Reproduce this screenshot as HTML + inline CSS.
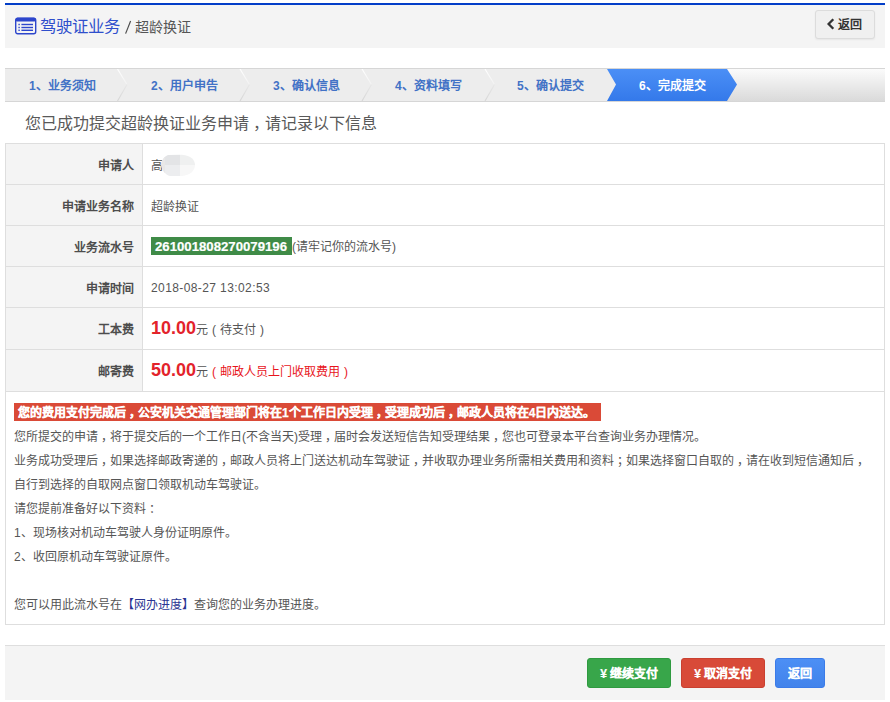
<!DOCTYPE html>
<html lang="zh-CN">
<head>
<meta charset="utf-8">
<style>
*{margin:0;padding:0;box-sizing:border-box;}
html,body{width:890px;height:702px;background:#fff;overflow:hidden;}
body{font-family:"Liberation Sans",sans-serif;color:#555;font-size:12px;position:relative;}
.abs{position:absolute;}
/* header */
#topline{left:5px;top:3px;width:880px;height:2px;background:#033ec8;}
#hdr{left:5px;top:5px;width:880px;height:43px;background:#f4f4f4;}
#icon{left:15px;top:17px;}
#title{left:40px;top:14px;font-size:16.4px;line-height:24px;color:#2f4fcc;white-space:nowrap;}
#sub{left:135px;top:17px;font-size:14px;line-height:20px;color:#555;white-space:nowrap;}
#back{left:815px;top:10px;width:60px;height:29px;border:1px solid #dcdcdc;border-radius:3px;background:#f0f0f0;box-shadow:0 1px 2px rgba(0,0,0,0.06);font-size:12px;font-weight:bold;color:#333;line-height:27px;text-align:center;}
/* steps */
#steps{left:5px;top:68px;width:880px;height:34px;border-top:1px solid #d6d6d6;border-bottom:1px solid #d6d6d6;background:linear-gradient(#fbfbfb,#dadada);}
.st{position:absolute;top:69px;height:32px;background:#ededed;}
.stt{position:absolute;top:70px;height:32px;line-height:32px;font-size:12px;font-weight:bold;color:#4272c6;white-space:nowrap;}
/* heading */
#head{left:25px;top:113px;font-size:16px;line-height:22px;color:#595959;white-space:nowrap;}
/* table */
#tbl{left:5px;top:143px;width:880px;height:482px;border:1px solid #dedede;}
.row{position:absolute;left:5px;width:880px;border-top:1px solid #dedede;}
.lab{position:absolute;left:6px;width:136px;background:#f4f4f4;}
.ltx{position:absolute;right:0;width:140px;text-align:right;font-size:12px;font-weight:bold;color:#4d4d4d;white-space:nowrap;}
.val{position:absolute;left:151px;font-size:12px;color:#555;white-space:nowrap;}
#vdiv{left:142px;top:144px;width:1px;height:247px;background:#dedede;}
.red{color:#e3232b;}
.red2{color:#e8141c;}
.yen{display:inline-block;margin-right:3px;}
.fp{position:relative;left:3px;}
#head .fp{left:4px;}
.pp{display:inline-block;width:12px;text-align:center;}
.notice{position:absolute;left:14px;font-size:12px;line-height:24px;color:#555;white-space:nowrap;}
#banner{left:14px;top:403px;width:587px;height:18px;background:#da4a37;color:#fff;font-weight:bold;font-size:12px;line-height:16px;padding-top:2px;padding-left:4px;-webkit-text-stroke:0.25px #fff;white-space:nowrap;}
/* footer */
#foot{left:5px;top:645px;width:880px;height:55px;background:#f4f4f4;border-top:1px solid #dedede;}
.btn{position:absolute;top:658px;height:30px;border-radius:3px;color:#fff;font-size:12px;font-weight:bold;-webkit-text-stroke:0.2px #fff;line-height:30px;text-align:center;white-space:nowrap;}
</style>
</head>
<body>
<div id="topline" class="abs"></div>
<div id="hdr" class="abs"></div>
<svg id="icon" class="abs" width="22" height="18" viewBox="0 0 22 18">
  <rect x="0.7" y="1.2" width="20" height="15.6" rx="2" fill="none" stroke="#2d46cc" stroke-width="1.4"/>
  <rect x="0.7" y="0.8" width="20" height="3.8" rx="1.5" fill="#2d46cc"/>
  <rect x="3.4" y="6.8" width="1.4" height="1.4" fill="#2d46cc"/>
  <rect x="3.4" y="9.8" width="1.4" height="1.4" fill="#2d46cc"/>
  <rect x="3.4" y="12.6" width="1.4" height="1.4" fill="#2d46cc"/>
  <rect x="6.4" y="6.8" width="11.6" height="1.4" fill="#2d46cc"/>
  <rect x="6.4" y="9.8" width="11.6" height="1.4" fill="#2d46cc"/>
  <rect x="6.4" y="12.6" width="11.6" height="1.4" fill="#2d46cc"/>
</svg>
<div id="title" class="abs">驾驶证业务</div>
<svg class="abs" style="left:120px;top:16px" width="16" height="22" viewBox="0 0 16 22"><line x1="10.6" y1="5" x2="5.6" y2="17.6" stroke="#4a4a4a" stroke-width="1.15"/></svg>
<div id="sub" class="abs">超龄换证</div>
<div id="back" class="abs"><span style="position:relative;left:5px;top:1px">返回</span></div>
<svg class="abs" style="left:826px;top:18px" width="10" height="12" viewBox="0 0 10 12"><polyline points="7.3,1.2 2.6,6 7.3,10.8" fill="none" stroke="#333" stroke-width="2.3"/></svg>

<div id="steps" class="abs"></div>
<svg class="abs" style="left:5px;top:69px" width="880" height="32" viewBox="0 0 880 32">
  <polygon points="0,0 612,0 612,32 0,32" fill="#ededed"/>
  <defs><linearGradient id="ag" x1="0" y1="0" x2="0" y2="1"><stop offset="0" stop-color="#4b8ff6"/><stop offset="1" stop-color="#3479ea"/></linearGradient></defs><polygon points="602,0 722,0 732,15.5 722,32 602,32 611,15.5" fill="url(#ag)"/>
  <defs><linearGradient id="hu" gradientUnits="userSpaceOnUse" x1="0" y1="0" x2="0" y2="16"><stop offset="0" stop-color="#ffffff"/><stop offset="1" stop-color="#f2f2f2"/></linearGradient><linearGradient id="hd" gradientUnits="userSpaceOnUse" x1="0" y1="15" x2="0" y2="32"><stop offset="0" stop-color="#e8e8e8"/><stop offset="1" stop-color="#d6d6d6"/></linearGradient></defs><g stroke-width="1.1" fill="none"><path d="M112.5,0 L122.0,15.5" stroke="url(#hu)"/><path d="M122.0,15.5 L112.5,32" stroke="url(#hd)"/><path d="M235,0 L244.5,15.5" stroke="url(#hu)"/><path d="M244.5,15.5 L235,32" stroke="url(#hd)"/><path d="M357,0 L366.5,15.5" stroke="url(#hu)"/><path d="M366.5,15.5 L357,32" stroke="url(#hd)"/><path d="M480,0 L489.5,15.5" stroke="url(#hu)"/><path d="M489.5,15.5 L480,32" stroke="url(#hd)"/></g>
</svg>
<div class="stt" style="left:29px">1、业务须知</div>
<div class="stt" style="left:151px">2、用户申告</div>
<div class="stt" style="left:273px">3、确认信息</div>
<div class="stt" style="left:395px">4、资料填写</div>
<div class="stt" style="left:517px">5、确认提交</div>
<div class="stt" style="left:639px;color:#fff">6、完成提交</div>

<div id="head" class="abs">您已成功提交超龄换证业务申请<span class="fp">，</span>请记录以下信息</div>

<div id="tbl" class="abs"></div>
<div class="lab" style="top:144px;height:247px"></div>
<div class="row" style="top:184px"></div>
<div class="row" style="top:225px"></div>
<div class="row" style="top:266px"></div>
<div class="row" style="top:307px"></div>
<div class="row" style="top:349px"></div>
<div class="row" style="top:391px"></div>
<div id="vdiv" class="abs"></div>

<div class="ltx" style="left:-6px;top:156px;width:140px">申请人</div>
<div class="ltx" style="left:-6px;top:197px;width:140px">申请业务名称</div>
<div class="ltx" style="left:-6px;top:238px;width:140px">业务流水号</div>
<div class="ltx" style="left:-6px;top:279px;width:140px">申请时间</div>
<div class="ltx" style="left:-6px;top:320px;width:140px">工本费</div>
<div class="ltx" style="left:-6px;top:362px;width:140px">邮寄费</div>

<div class="val" style="top:156px">高</div>
<svg class="abs" style="left:160px;top:154px" width="36" height="23" viewBox="0 0 36 23"><defs><clipPath id="bc"><path d="M1,10.5 C2,6 4,2.5 8,1 L22,0.7 C31,1.5 35,6 35,11 C35,16.5 30,21.5 22,22 L10,22 C5,21 2,16 1,10.5 Z"/></clipPath></defs><g clip-path="url(#bc)"><rect x="0" y="0" width="20" height="11" fill="#e3e4e6"/><rect x="20" y="0" width="16" height="11" fill="#eff0f0"/><rect x="0" y="11" width="20" height="12" fill="#ecedef"/><rect x="20" y="11" width="16" height="12" fill="#f7f7f7"/><rect x="0" y="0" width="5" height="23" fill="#e9e8e8"/></g></svg>
<div class="val" style="top:197px">超龄换证</div>
<div class="val" style="top:237px;line-height:20px"><span style="display:inline-block;vertical-align:top;background:#3f8b47;color:#fff;font-weight:bold;font-size:13.2px;padding:0 4px;width:141px;height:18px;overflow:hidden;line-height:20px;-webkit-text-stroke:0.2px #fff">261001808270079196</span>(请牢记你的流水号)</div>
<div class="val" style="top:281px;letter-spacing:0.4px">2018-08-27 13:02:53</div>
<div class="val" style="top:318px"><b class="red" style="font-size:18px">10.00</b>元<span class="pp">(</span>待支付<span class="pp">)</span></div>
<div class="val" style="top:360px"><b class="red" style="font-size:18px">50.00</b>元<span class="red2"><span class="pp">(</span>邮政人员上门收取费用<span class="pp">)</span></span></div>

<div id="banner" class="abs">您的费用支付完成后<span class="fp">，</span>公安机关交通管理部门将在1个工作日内受理<span class="fp">，</span>受理成功后<span class="fp">，</span>邮政人员将在4日内送达。</div>
<div class="notice" style="top:425px">您所提交的申请<span class="fp">，</span>将于提交后的一个工作日(不含当天)受理<span class="fp">，</span>届时会发送短信告知受理结果<span class="fp">，</span>您也可登录本平台查询业务办理情况。</div>
<div class="notice" style="top:449px">业务成功受理后<span class="fp">，</span>如果选择邮政寄递的<span class="fp">，</span>邮政人员将上门送达机动车驾驶证<span class="fp">，</span>并收取办理业务所需相关费用和资料<span class="fp">；</span>如果选择窗口自取的<span class="fp">，</span>请在收到短信通知后<span class="fp">，</span></div>
<div class="notice" style="top:473px">自行到选择的自取网点窗口领取机动车驾驶证。</div>
<div class="notice" style="top:497px">请您提前准备好以下资料<span class="fp">：</span></div>
<div class="notice" style="top:521px">1、现场核对机动车驾驶人身份证明原件。</div>
<div class="notice" style="top:545px">2、收回原机动车驾驶证原件。</div>
<div class="notice" style="top:593px">您可以用此流水号在<span style="color:#2a3592">【网办进度】</span>查询您的业务办理进度。</div>

<div id="foot" class="abs"></div>
<div class="btn" style="left:587px;width:84px;background:#38a64a;border:1px solid #2f9a40"><span class="yen">¥</span>继续支付</div>
<div class="btn" style="left:681px;width:84px;background:#d84a38;border:1px solid #c94030"><span class="yen">¥</span>取消支付</div>
<div class="btn" style="left:775px;width:50px;background:linear-gradient(#4c8ff5,#4283eb);border:1px solid #3b7be8">返回</div>
</body>
</html>
